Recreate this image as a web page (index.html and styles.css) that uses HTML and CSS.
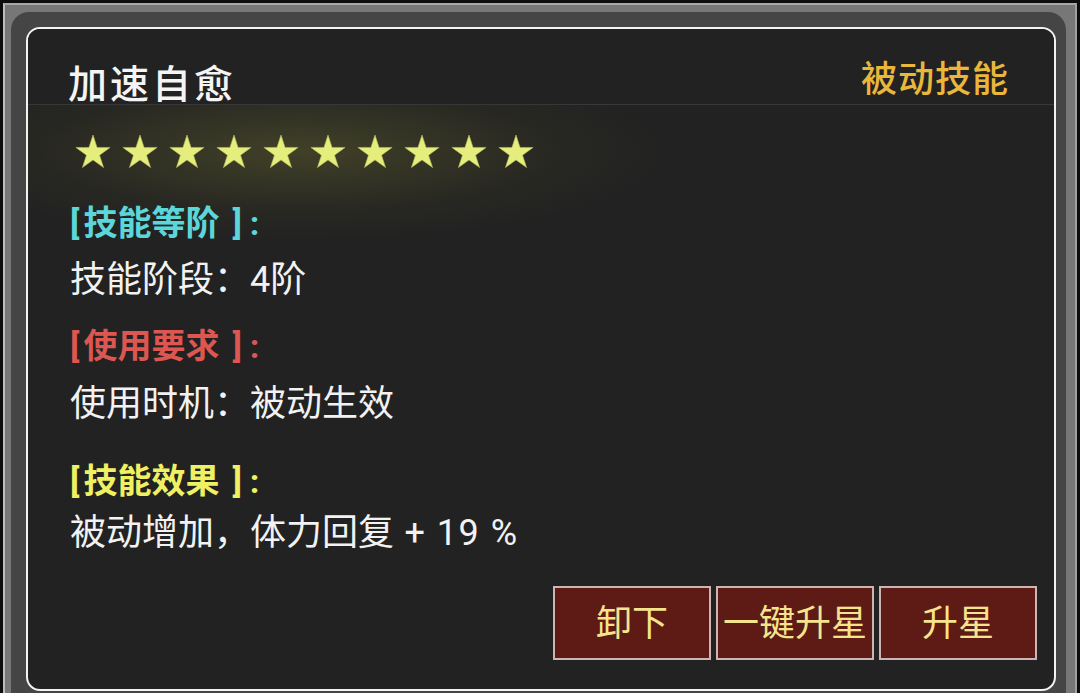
FILE: index.html
```html
<!DOCTYPE html>
<html lang="zh-CN">
<head>
<meta charset="utf-8">
<title>加速自愈</title>
<link rel="stylesheet" href="styles.css">
</head>
<body>
<div class="screen">
  <div class="frame">
    <div class="inner">
      <div class="panel">
        <div class="header">
          <div class="title">加速自愈</div>
          <div class="type">被动技能</div>
        </div>
        <div class="stars">
          <svg class="star" viewBox="0 0 36 35"><polygon points="18,1 22.06,13.42 35.12,13.44 24.56,21.13 28.58,33.56 18,25.9 7.42,33.56 11.44,21.13 0.88,13.44 13.94,13.42"/></svg>
          <svg class="star" viewBox="0 0 36 35"><polygon points="18,1 22.06,13.42 35.12,13.44 24.56,21.13 28.58,33.56 18,25.9 7.42,33.56 11.44,21.13 0.88,13.44 13.94,13.42"/></svg>
          <svg class="star" viewBox="0 0 36 35"><polygon points="18,1 22.06,13.42 35.12,13.44 24.56,21.13 28.58,33.56 18,25.9 7.42,33.56 11.44,21.13 0.88,13.44 13.94,13.42"/></svg>
          <svg class="star" viewBox="0 0 36 35"><polygon points="18,1 22.06,13.42 35.12,13.44 24.56,21.13 28.58,33.56 18,25.9 7.42,33.56 11.44,21.13 0.88,13.44 13.94,13.42"/></svg>
          <svg class="star" viewBox="0 0 36 35"><polygon points="18,1 22.06,13.42 35.12,13.44 24.56,21.13 28.58,33.56 18,25.9 7.42,33.56 11.44,21.13 0.88,13.44 13.94,13.42"/></svg>
          <svg class="star" viewBox="0 0 36 35"><polygon points="18,1 22.06,13.42 35.12,13.44 24.56,21.13 28.58,33.56 18,25.9 7.42,33.56 11.44,21.13 0.88,13.44 13.94,13.42"/></svg>
          <svg class="star" viewBox="0 0 36 35"><polygon points="18,1 22.06,13.42 35.12,13.44 24.56,21.13 28.58,33.56 18,25.9 7.42,33.56 11.44,21.13 0.88,13.44 13.94,13.42"/></svg>
          <svg class="star" viewBox="0 0 36 35"><polygon points="18,1 22.06,13.42 35.12,13.44 24.56,21.13 28.58,33.56 18,25.9 7.42,33.56 11.44,21.13 0.88,13.44 13.94,13.42"/></svg>
          <svg class="star" viewBox="0 0 36 35"><polygon points="18,1 22.06,13.42 35.12,13.44 24.56,21.13 28.58,33.56 18,25.9 7.42,33.56 11.44,21.13 0.88,13.44 13.94,13.42"/></svg>
          <svg class="star" viewBox="0 0 36 35"><polygon points="18,1 22.06,13.42 35.12,13.44 24.56,21.13 28.58,33.56 18,25.9 7.42,33.56 11.44,21.13 0.88,13.44 13.94,13.42"/></svg>
        </div>
        <div class="body">
          <div class="sect sect-1">
            <div class="head cyan"><span class="bl">[</span>技能等阶<span class="br">]</span><span class="co">:</span></div>
            <div class="line">技能阶段：4阶</div>
          </div>
          <div class="sect sect-2">
            <div class="head red"><span class="bl">[</span>使用要求<span class="br">]</span><span class="co">:</span></div>
            <div class="line">使用时机：被动生效</div>
          </div>
          <div class="sect sect-3">
            <div class="head yellow"><span class="bl">[</span>技能效果<span class="br">]</span><span class="co">:</span></div>
            <div class="line">被动增加，体力回复<span class="num"> + 19 %</span></div>
          </div>
        </div>
        <div class="actions">
          <div class="btn">卸下</div>
          <div class="btn">一键升星</div>
          <div class="btn">升星</div>
        </div>
      </div>
    </div>
  </div>
</div>
</body>
</html>
```
FILE: styles.css
```css
* { box-sizing: border-box; }
html, body { margin: 0; padding: 0; }
body {
  width: 1080px;
  height: 693px;
  overflow: hidden;
  background: #0d0d0d;
  font-family: Roboto, "Noto Sans CJK SC", "Noto Sans", sans-serif;
}
.screen {
  width: 1080px;
  height: 693px;
  padding: 3px 3px 0 3px;
  background: #0d0d0d;
}
.frame {
  height: 100%;
  background: #777;
  border-top: 2px solid #a8a8a8;
  border-left: 2px solid #bdbdbd;
  border-right: 2px solid #a0a0a0;
  padding: 7px 9px 0 6px;
}
.inner {
  height: 100%;
  background: #454545;
  border-radius: 18px 18px 0 0;
  padding: 15px 10px 0 15px;
}
.panel {
  width: 1030px;
  height: 664px;
  border: 2px solid #f2f2f2;
  border-radius: 14px;
  overflow: hidden;
  display: flex;
  flex-direction: column;
  background:
    radial-gradient(ellipse 380px 90px at 270px 122px, rgba(90, 90, 45, 0.55), rgba(60, 60, 35, 0.18) 70%, rgba(34, 34, 34, 0) 100%),
    #222;
}
.header {
  height: 76px;
  flex: none;
  display: flex;
  justify-content: space-between;
  align-items: flex-end;
  padding: 0 45px 0 40px;
  background: #222;
  border-bottom: 1px solid #383838;
}
.title {
  font-size: 39px;
  line-height: 46px;
  font-weight: 500;
  letter-spacing: 3px;
  color: #f4f4f4;
  margin-bottom: -4px;
}
.type {
  font-size: 36px;
  line-height: 46px;
  font-weight: 500;
  letter-spacing: 1px;
  color: #e9b73c;
  margin-bottom: 1px;
}
.stars {
  display: flex;
  gap: 11px;
  padding-left: 47px;
  margin-top: 29px;
  height: 35px;
  flex: none;
}
.star {
  width: 36px;
  height: 35px;
  fill: #e5ee7c;
  stroke: #b9bd5c;
  stroke-width: 0.6;
}
.body {
  padding-left: 42px;
  margin-top: 29px;
}
.head {
  font-size: 34px;
  line-height: 50px;
  font-weight: 700;
}
.bl { margin-right: 4px; }
.br { margin-left: 13px; }
.co { margin-left: 8px; }
.line {
  font-size: 36px;
  line-height: 52px;
  color: #f2f2f2;
  margin-top: 6px;
}
.num { letter-spacing: 1.5px; }
.sect-2 { margin-top: 15px; }
.sect-2 .line { margin-top: 7px; }
.sect-3 { margin-top: 26px; }
.sect-3 .line { margin-top: 1px; }
.cyan { color: #5cd6d8; }
.red { color: #dc5652; }
.yellow { color: #eff062; }
.actions {
  margin-top: auto;
  display: flex;
  justify-content: flex-end;
  gap: 5px;
  padding: 0 17px 29px 0;
}
.btn {
  width: 158px;
  height: 74px;
  background: #5e1a14;
  border: 2px solid #cbb5b5;
  color: #f6e48d;
  font-size: 36px;
  line-height: 72px;
  text-align: center;
}
```
